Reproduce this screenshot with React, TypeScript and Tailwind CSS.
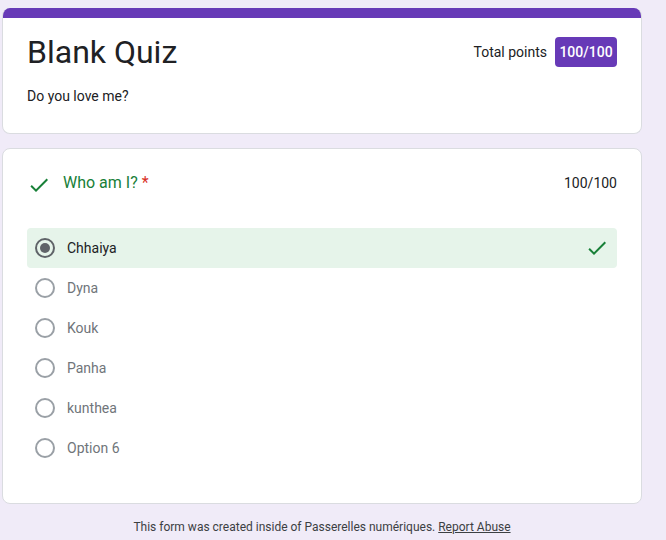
const OPTIONS = ["Chhaiya", "Dyna", "Kouk", "Panha", "kunthea", "Option 6"];
const ANSWER = "Chhaiya";

function Check({ className }: { className?: string }) {
  return (
    <svg viewBox="0 0 24 24" className={className} fill="currentColor" aria-hidden="true">
      <path d="M9 16.17L4.83 12l-1.42 1.41L9 19 21 7l-1.41-1.41z" />
    </svg>
  );
}

function Radio({ checked }: { checked: boolean }) {
  return (
    <span
      className={
        checked
          ? "flex h-5 w-5 shrink-0 items-center justify-center rounded-full border-2 border-[#5f6368]"
          : "flex h-5 w-5 shrink-0 items-center justify-center rounded-full border-2 border-[#9aa0a6]"
      }
    >
      {checked && <span className="h-[10px] w-[10px] rounded-full bg-[#5f6368]" />}
    </span>
  );
}

export default function App() {
  return (
    <div className="min-h-[540px] bg-[#f0ebf8] pt-2 font-['Roboto',sans-serif] text-[#202124]">
      <div className="ml-[2px] w-[640px]">
        {/* header card */}
        <div className="overflow-hidden rounded-lg border border-t-0 border-[#dadce0] bg-white">
          <div className="h-[10px] bg-[#673ab7]" />
          <div className="px-6 pt-[14px] pb-[27px]">
            <div className="flex h-10 items-center justify-between">
              <h1 className="text-[32px] leading-10 font-normal">Blank Quiz</h1>
              <div className="flex items-center gap-2 text-sm">
                <span>Total points</span>
                <span className="flex h-[30px] w-[62px] items-center justify-center rounded bg-[#673ab7] font-medium text-white">
                  100/100
                </span>
              </div>
            </div>
            <p className="mt-[14px] text-sm leading-5">Do you love me?</p>
          </div>
        </div>

        {/* question card */}
        <div className="mt-[14px] rounded-lg border border-[#dadce0] bg-white px-6 pt-6 pb-[35px]">
          <div className="flex h-6 items-start justify-between">
            <div className="flex items-start gap-3">
              <Check className="h-6 w-6 text-[#188038]" />
              <span className="text-base leading-5 text-[#188038]">
                Who am I? <span className="text-[#d93025]">*</span>
              </span>
            </div>
            <span className="text-sm leading-5">100/100</span>
          </div>

          <div className="mt-[31px] flex flex-col">
            {OPTIONS.map((o) => {
              const picked = o === ANSWER;
              return (
                <div
                  key={o}
                  className={
                    picked
                      ? "flex h-10 items-center gap-3 rounded bg-[#e6f4ea] pr-2 pl-2"
                      : "flex h-10 items-center gap-3 pr-2 pl-2"
                  }
                >
                  <Radio checked={picked} />
                  <span className={picked ? "flex-1 text-sm text-[#202124]" : "flex-1 text-sm text-[#70757a]"}>
                    {o}
                  </span>
                  {picked && <Check className="h-6 w-6 text-[#188038]" />}
                </div>
              );
            })}
          </div>
        </div>

        <p className="mt-[15px] text-center text-xs leading-4 text-[#3c4043]">
          This form was created inside of Passerelles numériques.{" "}
          <span className="underline">Report Abuse</span>
        </p>
      </div>
    </div>
  );
}
